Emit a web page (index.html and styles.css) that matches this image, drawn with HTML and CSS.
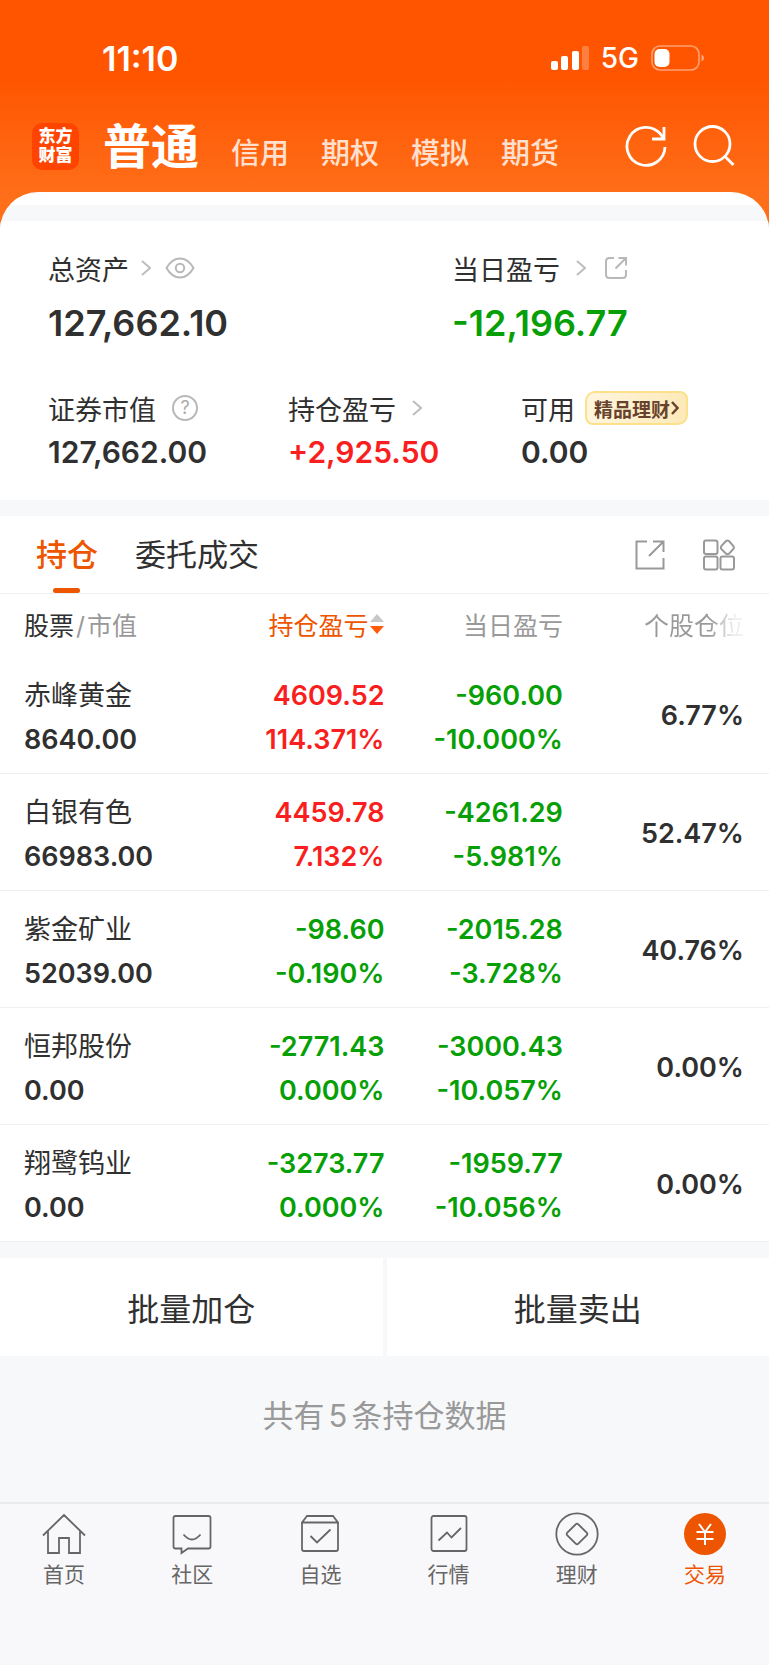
FILE: index.html
```html
<!DOCTYPE html>
<html lang="zh-CN">
<head>
<meta charset="utf-8">
<meta name="viewport" content="width=device-width, initial-scale=1">
<title>交易</title>
<link rel="stylesheet" href="styles.css">
</head>
<body>
<div class="app">
  <header class="top">
    <div class="status">
      <time class="clock">11:10</time>
      <div class="status-right">
        <svg width="38" height="26" viewBox="0 0 38 26" fill="#fff" aria-hidden="true"><rect x="0" y="16" width="7" height="9" rx="2"/><rect x="10" y="11" width="7" height="14" rx="2"/><rect x="21" y="6" width="7" height="19" rx="2"/><rect x="31" y="1" width="7" height="24" rx="2" opacity=".25"/></svg>
        <span class="network">5G</span>
        <svg width="54" height="26" viewBox="0 0 54 26" aria-hidden="true"><rect x="1" y="1" width="47" height="24" rx="8" fill="none" stroke="#fff" stroke-width="1.6" opacity=".45"/><rect x="3.5" y="4" width="15" height="18" rx="5" fill="#fff"/><path d="M50.5 9.5q2.5 1 2.5 3.5t-2.5 3.5z" fill="#fff" opacity=".5"/></svg>
      </div>
    </div>
    <div class="bar">
      <div class="logo"><span>东方</span><span>财富</span></div>
      <nav class="accounts">
        <a class="account current" href="#">普通</a>
        <a class="account" href="#">信用</a>
        <a class="account" href="#">期权</a>
        <a class="account" href="#">模拟</a>
        <a class="account" href="#">期货</a>
      </nav>
      <div class="bar-actions">
        <button type="button" aria-label="刷新"><svg width="42" height="44" viewBox="0 0 42 44" fill="none" stroke="#fff" stroke-width="2.8"><path d="M40 23a19 19 0 1 1-5-13.500L39 15"/><path d="M39 3v12H27"/></svg></button>
        <button type="button" aria-label="搜索"><svg width="42" height="44" viewBox="0 0 42 44" fill="none" stroke="#fff" stroke-width="2.8"><circle cx="19.5" cy="20" r="17.5"/><path d="M32 32.500l8.500 8.500"/></svg></button>
      </div>
    </div>
  </header>

  <main class="sheet">
    <section class="summary">
      <div class="totals">
        <div class="stat">
          <div class="label">总资产
            <svg class="chev chev-near" width="10" height="16" viewBox="0 0 10 16"><path d="M1 1l8 7-8 7"/></svg>
            <button type="button" aria-label="显示金额"><svg class="line" width="30" height="22" viewBox="0 0 30 22"><path d="M1.500 11Q7 1.500 15 1.500T28.500 11Q23 20.500 15 20.500T1.500 11z"/><circle cx="15" cy="11" r="4.200"/></svg></button>
          </div>
          <div class="value big">127,662.10</div>
        </div>
        <div class="stat">
          <div class="label">当日盈亏
            <svg class="chev" width="10" height="16" viewBox="0 0 10 16"><path d="M1 1l8 7-8 7"/></svg>
            <button class="share-small" type="button" aria-label="分享"><svg class="line" width="24" height="24" viewBox="0 0 24 24"><path d="M10 2H5.500Q2 2 2 5.500v13Q2 22 5.500 22h13q3.500 0 3.500-3.500V14M14.500 2H22v7.500M22 2L11.500 12.500"/></svg></button>
          </div>
          <div class="value big down">-12,196.77</div>
        </div>
      </div>
      <div class="details">
        <div class="stat">
          <div class="label">证券市值
            <button class="help" type="button" aria-label="说明">?</button>
          </div>
          <div class="value">127,662.00</div>
        </div>
        <div class="stat">
          <div class="label">持仓盈亏
            <svg class="chev" width="10" height="16" viewBox="0 0 10 16"><path d="M1 1l8 7-8 7"/></svg>
          </div>
          <div class="value up">+2,925.50</div>
        </div>
        <div class="stat">
          <div class="label">可用
            <a class="promo" href="#">精品理财<svg width="8" height="14" viewBox="0 0 8 14"><path d="M1 1l5.500 6L1 13"/></svg></a>
          </div>
          <div class="value">0.00</div>
        </div>
      </div>
    </section>

    <section class="holdings">
      <div class="tabs">
        <a class="tab active" href="#">持仓</a>
        <a class="tab" href="#">委托成交</a>
        <div class="tab-actions">
          <button type="button" aria-label="分享持仓"><svg width="30" height="30" viewBox="0 0 30 30"><path d="M12 1.500H1.500v27h27V18M18 1.500h10.500V12M28.500 1.500L14 16"/></svg></button>
          <button type="button" aria-label="更多功能"><svg width="32" height="32" viewBox="0 0 32 32"><rect x="1" y="1.500" width="13.500" height="13.500" rx="2"/><rect x="1" y="17.500" width="13.500" height="13" rx="2"/><rect x="17.500" y="17.500" width="13.500" height="13" rx="2"/><path d="M22.800 2.300q1.700-1.500 3.400 0l4 4.500q1.300 1.700 0 3.400l-4 4.300q-1.700 1.500-3.400 0l-4.300-4.300q-1.300-1.700 0-3.400z"/></svg></button>
        </div>
      </div>
      <table class="positions">
        <colgroup><col class="c1"><col class="c2"><col class="c3"><col class="c4"></colgroup>
        <thead>
          <tr>
            <th scope="col"><span class="dark">股票</span><span class="slash">/</span>市值</th>
            <th scope="col"><button class="sort" type="button">持仓盈亏<svg width="14" height="20" viewBox="0 0 14 20"><path d="M7 0l7 8H0z" fill="#c8c8c8"/><path d="M7 20l7-8H0z" fill="#ff5a0a"/></svg></button></th>
            <th scope="col">当日盈亏</th>
            <th scope="col"><span class="fade">个股仓位</span></th>
          </tr>
        </thead>
        <tbody>
          <tr><td><span class="name">赤峰黄金</span><span>8640.00</span></td><td class="up"><span>4609.52</span><span>114.371%</span></td><td class="down"><span>-960.00</span><span>-10.000%</span></td><td>6.77%</td></tr>
          <tr><td><span class="name">白银有色</span><span>66983.00</span></td><td class="up"><span>4459.78</span><span>7.132%</span></td><td class="down"><span>-4261.29</span><span>-5.981%</span></td><td>52.47%</td></tr>
          <tr><td><span class="name">紫金矿业</span><span>52039.00</span></td><td class="down"><span>-98.60</span><span>-0.190%</span></td><td class="down"><span>-2015.28</span><span>-3.728%</span></td><td>40.76%</td></tr>
          <tr><td><span class="name">恒邦股份</span><span>0.00</span></td><td class="down"><span>-2771.43</span><span>0.000%</span></td><td class="down"><span>-3000.43</span><span>-10.057%</span></td><td>0.00%</td></tr>
          <tr><td><span class="name">翔鹭钨业</span><span>0.00</span></td><td class="down"><span>-3273.77</span><span>0.000%</span></td><td class="down"><span>-1959.77</span><span>-10.056%</span></td><td>0.00%</td></tr>
        </tbody>
      </table>
    </section>

    <div class="batch">
      <button type="button">批量加仓</button>
      <button type="button">批量卖出</button>
    </div>
    <p class="count">共有<span>5</span>条持仓数据</p>
  </main>

  <nav class="tabbar">
    <a href="#"><svg width="44" height="44" viewBox="0 0 44 44"><path d="M1 23.500L22 3l21 20.500M6 19v22h11V26h10v15h11V19"/></svg>首页</a>
    <a href="#"><svg width="44" height="44" viewBox="0 0 44 44"><path d="M5.500 4h33q2 0 2 2v28.500q0 2-2 2H18L11.500 41v-4.500h-6q-2 0-2-2V6q0-2 2-2z"/><path d="M13.500 22.500q8.500 10 17 0"/></svg>社区</a>
    <a href="#"><svg width="44" height="44" viewBox="0 0 44 44"><path d="M4 10.500h36V37q0 2-2 2H6q-2 0-2-2zL9 4h26l5 6.500"/><path d="M12.500 24l6.500 6.500L32.500 17.500"/></svg>自选</a>
    <a href="#"><svg width="44" height="44" viewBox="0 0 44 44"><rect x="4.500" y="4" width="35" height="35" rx="2"/><path d="M11.500 28.500l8.500-8 4.500 5L34 16"/></svg>行情</a>
    <a href="#"><svg width="44" height="44" viewBox="0 0 44 44"><circle cx="22" cy="22" r="20.700"/><path d="M20.700 12.300q1.300-1.300 2.600 0l8.400 8.400q1.300 1.300 0 2.600l-8.400 8.400q-1.300 1.300-2.600 0l-8.400-8.400q-1.300-1.300 0-2.600z"/></svg>理财</a>
    <a class="active" href="#"><svg width="44" height="44" viewBox="0 0 44 44"><circle class="coin" cx="22" cy="22" r="21"/><path class="yen" d="M16 12l6 8 6-8M13.500 20h17M13.500 27h17M22 20v13"/></svg>交易</a>
  </nav>
</div>
</body>
</html>
```

FILE: styles.css
```css
* { box-sizing: border-box; }

body {
  margin: 0;
  background: #f7f8fa;
  color: #303030;
  font-family: Inter, "Noto Sans CJK SC", sans-serif;
}

a { color: inherit; text-decoration: none; }

button {
  margin: 0;
  padding: 0;
  border: 0;
  background: none;
  color: inherit;
  font: inherit;
}

svg { display: block; flex: none; }

.app {
  display: flex;
  flex-direction: column;
  min-height: 100vh;
}

/* Header */
.top {
  padding: 32px 32px 68px;
  background: linear-gradient(#ff5500 0, #ff5500 76px, #ff6f1a 200px);
  color: #fff;
}

.status {
  display: flex;
  align-items: center;
  justify-content: space-between;
  height: 52px;
  padding: 0 32px 0 70px;
}

.clock { font-size: 34px; font-weight: 600; }

.status-right { display: flex; align-items: center; gap: 12px; }

.network { font-size: 28px; font-weight: 500; }

.bar {
  display: flex;
  align-items: center;
  height: 80px;
  margin-top: 20px;
}

.logo {
  display: flex;
  flex-direction: column;
  align-items: center;
  justify-content: center;
  width: 47px;
  height: 47px;
  margin-top: 4px;
  border-radius: 10px;
  background: #ff4400;
  font-size: 17px;
  font-weight: 900;
  line-height: 19px;
}

.accounts {
  display: flex;
  align-items: baseline;
  gap: 32px;
  margin-top: 12px;
  margin-left: 24px;
  line-height: 60px;
}

.account { color: #ffe0cf; font-size: 29px; font-weight: 500; }

.account.current { color: #fff; font-size: 48px; font-weight: 700; }

.bar-actions {
  display: flex;
  gap: 26px;
  margin: 4px 2px 0 auto;
}

/* Content sheet */
.sheet {
  flex: 1;
  margin-top: -60px;
  border-radius: 38px 38px 0 0;
  background: linear-gradient(#fff 13px, #f7f8fa 13px);
  overflow: hidden;
}

.summary {
  margin-top: 29px;
  padding: 24px 48px 27px;
  background: #fff;
}

.totals { display: grid; grid-template-columns: 404fr 269fr; }

.details {
  display: grid;
  grid-template-columns: 240fr 233fr 200fr;
  margin-top: 30px;
}

.label {
  display: flex;
  align-items: center;
  gap: 16px;
  height: 46px;
  font-size: 27px;
  white-space: nowrap;
}

.value { font-size: 30px; font-weight: 600; line-height: 42px; }

.value.big { font-size: 36px; line-height: 64px; }

.up { color: #f91f20; }

.down { color: #06a006; }

.chev { fill: none; stroke: #bdbdbd; stroke-width: 2; }

.chev-near { margin: 0 -2px 0 -4px; }

.share-small { margin-left: 2px; }

.line { fill: none; stroke: #b8b8b8; stroke-width: 2; }

.help {
  width: 26px;
  height: 26px;
  border: 2px solid #b8b8b8;
  border-radius: 50%;
  color: #aaa;
  font-size: 18px;
  line-height: 22px;
}

.promo {
  display: flex;
  align-items: center;
  gap: 1px;
  height: 34px;
  margin-left: -6px;
  padding: 0 7px;
  border: 2px solid #fde08a;
  border-radius: 10px 8px 10px 8px;
  background: linear-gradient(100deg, #fff6e0, #fde9b8);
  color: #68422c;
  font-size: 19px;
  font-weight: 700;
}

.promo svg { fill: none; stroke: #68422c; stroke-width: 2.5; }

/* Holdings */
.holdings { margin-top: 16px; background: #fff; }

.tabs {
  display: flex;
  align-items: stretch;
  gap: 37px;
  height: 78px;
  padding: 0 34px 0 36px;
  border-bottom: 1px solid #eeeff1;
  font-size: 31px;
}

.tab { position: relative; line-height: 78px; }

.tab.active { color: #ee5500; font-weight: 500; }

.tab.active::after {
  content: "";
  position: absolute;
  bottom: 0;
  left: 50%;
  width: 27px;
  height: 5px;
  margin-left: -14px;
  border-radius: 3px;
  background: #ee5500;
}

.tab-actions {
  display: flex;
  align-items: center;
  gap: 38px;
  margin-left: auto;
}

.tab-actions svg {
  fill: none;
  stroke: #999;
  stroke-width: 2;
}

.positions {
  width: 100%;
  border-collapse: collapse;
  table-layout: fixed;
}

.c1 { width: 26%; }
.c2 { width: 24%; }
.c3 { width: 23.2%; }
.c4 { width: 26.8%; }

.positions th {
  height: 62px;
  padding: 0 0 2px;
  color: #999;
  font-size: 25px;
  font-weight: 400;
  text-align: right;
  white-space: nowrap;
}

.positions td {
  height: 117px;
  padding: 7px 0 0;
  border-bottom: 1px solid #eeeff1;
  font-size: 27px;
  font-weight: 600;
  line-height: 44px;
  text-align: right;
}

.positions td span { display: block; }

.positions th:first-child,
.positions td:first-child { padding-left: 24px; text-align: left; }

.positions th:last-child { padding-right: 25px; }

.positions td:last-child { padding: 4px 25px 0 0; }

.positions .name { font-weight: 400; }

.dark { color: #303030; }

.slash { padding: 0 2px; }

.sort {
  display: inline-flex;
  align-items: center;
  gap: 2px;
  color: #ee5500;
}

.fade {
  background: linear-gradient(90deg, #999 65%, #eee 90%);
  background-clip: text;
  color: transparent;
}

.batch {
  display: grid;
  grid-template-columns: 1fr 1fr;
  gap: 4px;
  margin-top: 16px;
}

.batch button {
  height: 98px;
  background: #fff;
  font-size: 32px;
}

.count {
  margin: 36px 0 0;
  color: #999;
  font-size: 31px;
  line-height: 48px;
  text-align: center;
}

.count span { padding: 0 4px; }

/* Bottom navigation */
.tabbar {
  display: grid;
  grid-template-columns: repeat(6, 1fr);
  height: 163px;
  padding-top: 8px;
  border-top: 2px solid #eaebed;
  background: #f8f8fb;
  color: #666;
  font-size: 21px;
  line-height: 38px;
}

.tabbar a {
  display: flex;
  flex-direction: column;
  align-items: center;
}

.tabbar svg {
  fill: none;
  stroke: #666;
  stroke-width: 1.8;
}

.tabbar .active { color: #ee5500; }

.tabbar .coin { fill: #ee5500; stroke: none; }

.tabbar .yen { stroke: #fff; stroke-width: 2; }
```
